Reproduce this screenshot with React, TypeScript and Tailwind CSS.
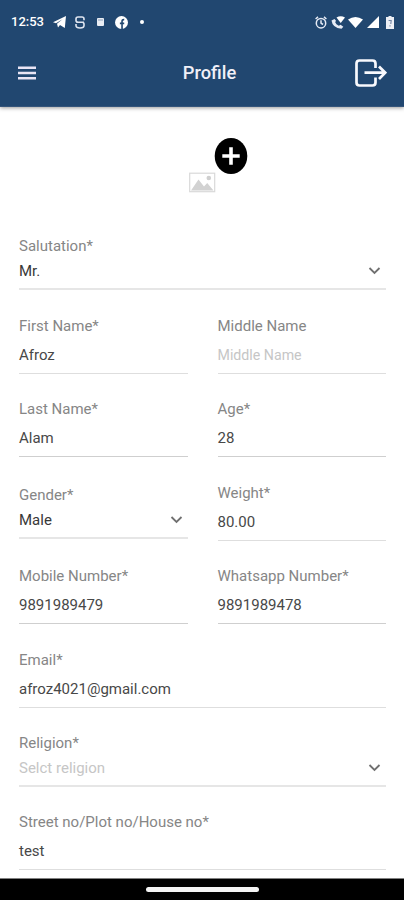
import React from "react";

type FieldProps = {
  label: string;
  value: string;
  muted?: boolean;
  line?: string;
};

function TextField({ label, value, muted = false, line = "border-[#dedede]" }: FieldProps) {
  return (
    <div className={`flex h-[58px] min-w-0 flex-1 flex-col gap-[9px] border-b ${line}`}>
      <div className="h-5 whitespace-nowrap text-[15px] leading-5 text-[#868686]">{label}</div>
      <div
        className={
          muted
            ? "h-5 whitespace-nowrap text-[14.2px] leading-5 text-[#c6c6c6]"
            : "h-5 whitespace-nowrap text-[15px] leading-5 text-[#484848]"
        }
      >
        {value}
      </div>
    </div>
  );
}

function SelectField({ label, value, muted = false }: FieldProps) {
  return (
    <div className="flex min-w-0 flex-1 flex-col gap-[5px] border-b-2 border-[#e6e6e6]">
      <div className="h-5 whitespace-nowrap text-[15px] leading-5 text-[#868686]">{label}</div>
      <div className="flex h-[27px] items-start justify-between pr-[5px]">
        <span className={muted ? "text-[15px] leading-5 text-[#c6c6c6]" : "text-[15px] leading-5 text-[#383838]"}>
          {value}
        </span>
        <svg className="mt-[5px]" width="13" height="10" viewBox="0 0 13 10" fill="none" stroke="#707070" strokeWidth="1.8">
          <path d="M1.5 2 6.5 7 11.5 2" />
        </svg>
      </div>
    </div>
  );
}

function StatusBar() {
  return (
    <div className="flex h-11 items-center justify-between pl-[11px] pr-[10px] text-white">
      <div className="flex items-center">
        <span className="w-[34px] text-[13px] font-medium leading-4">12:53</span>
        <svg className="ml-[8px]" width="13" height="12" viewBox="0 0 13 12" fill="#fff">
          <path d="M0 6.3 13 0 11.8 12 7 9 5 11.4 4 7.8 9.5 3.2 3 7.3Z" />
        </svg>
        <svg className="ml-[9px]" width="10" height="13" viewBox="0 0 10 13" fill="none" stroke="#dfe5f0" strokeWidth="1.6">
          <path d="M9 4.2V3Q9 1 7 1H3Q1 1 1 3V4.6Q1 6.2 3 6.2H7Q9 6.2 9 8V9.5Q9 12 5 12T1 9.5V8M1 6.2H9" />
        </svg>
        <svg className="ml-[12px]" width="7" height="8" viewBox="0 0 7 8">
          <rect width="7" height="8" rx="1" fill="#e9edf4" />
          <path d="M1 2H6" stroke="#8da1bb" strokeWidth="1" />
        </svg>
        <svg className="ml-[11px]" width="13" height="13" viewBox="0 0 12 12">
          <circle cx="6" cy="6" r="6" fill="#fff" />
          <path d="M6.5 12V5Q6.5 3.2 8.5 3.4M4.5 6.8H8.5" fill="none" stroke="#214770" strokeWidth="1.5" />
        </svg>
        <span className="ml-[12px] h-1 w-1 rounded-full bg-white" />
      </div>
      <div className="flex items-center">
        <svg width="12" height="13" viewBox="0 0 12 13" fill="none" stroke="#e6ebf5" strokeWidth="1.5">
          <circle cx="6" cy="7.2" r="4.7" />
          <path d="M.6 3 3 .9M11.4 3 9 .9M6 4.2V7.2L8 8.5" />
        </svg>
        <svg className="ml-[4px]" width="14" height="13" viewBox="0 0 14 13">
          <path d="M.5 4.5Q1.5 12 10.5 12.8L12.3 10.8 9.6 8.8 7.8 9.8Q5 8.5 4.2 6.3L5 4.8 3.5 3Z" fill="#e6ebf5" />
          <path d="M5.5 1.6Q9.7-1.2 14 1.6L9.7 7Z" fill="#fff" />
        </svg>
        <svg className="ml-[3px]" width="15" height="11" viewBox="0 0 15 11" fill="#fff">
          <path d="M0 2.6Q7.5-2.6 15 2.6L7.5 11Z" />
        </svg>
        <svg className="ml-[4px]" width="12" height="12" viewBox="0 0 12 12" fill="#fff">
          <path d="M12 0V12H0Z" />
        </svg>
        <svg className="ml-[7px]" width="8" height="13" viewBox="0 0 8 13">
          <path d="M2.5 0H5.5V1H8V13H0V1H2.5Z" fill="#eceff5" />
          <path d="M2.6 4.5H5.2L4.8 8M4 9.3V10.5" fill="none" stroke="#6e83a3" strokeWidth="1.1" />
        </svg>
      </div>
    </div>
  );
}

function Header() {
  return (
    <header className="z-10 h-[107px] shrink-0 border-b border-[#35557b] bg-[#214770] shadow-[0_1px_4px_rgba(0,0,0,0.4)]">
      <StatusBar />
      <div className="grid h-[57px] grid-cols-[1fr_auto_1fr] items-center pl-[18px] pr-[17px]">
        <svg width="18" height="14" viewBox="0 0 18 14" stroke="#e9e5f5" strokeWidth="2.6">
          <path d="M0 1.8H18M0 7H18M0 12.2H18" />
        </svg>
        <h1 className="pl-[14px] text-[18.3px] font-medium leading-6 text-[#f0f0f8]">Profile</h1>
        <svg className="justify-self-end" width="32" height="28" viewBox="0 0 32 28" fill="none" stroke="#f8f9fd" strokeWidth="2.7">
          <path d="M20.5 9V4.5Q20.5 1.5 17.5 1.5H4.5Q1.5 1.5 1.5 4.5V23.5Q1.5 26.5 4.5 26.5H17.5Q20.5 26.5 20.5 23.5V18.5" />
          <path d="M9.5 13.7H30M24 7.5 30.2 13.7 24 20" />
        </svg>
      </div>
    </header>
  );
}

function PhotoPicker() {
  return (
    <div className="h-[129px] shrink-0 pl-[188px] pt-[31px]">
      <svg width="60" height="56" viewBox="0 0 60 56">
        <rect x="1.7" y="35.2" width="25" height="18.5" fill="#fff" stroke="#d9d9d9" strokeWidth="1.2" />
        <path d="M3 52.5 10.5 41.5 16 48.5 19.2 45 25.5 52.5Z" fill="#d2d2d2" />
        <circle cx="20.8" cy="40" r="2.3" fill="#cfcfcf" />
        <ellipse cx="43" cy="18" rx="16.3" ry="18" fill="#000" />
        <path d="M43 9.2V26.8M34.3 18H51.7" stroke="#fff" strokeWidth="3.6" />
      </svg>
    </div>
  );
}

export default function App() {
  return (
    <div className="flex h-[900px] w-[404px] flex-col overflow-hidden bg-white font-[Roboto,sans-serif]">
      <Header />
      <PhotoPicker />
      <main className="flex h-[642px] shrink-0 flex-col pl-[19px] pr-[18px]">
        <div className="flex h-[54px]">
          <SelectField label="Salutation*" value="Mr." />
        </div>
        <div className="mt-[26px] flex gap-[30px]">
          <TextField label="First Name*" value="Afroz" />
          <TextField label="Middle Name" value="Middle Name" muted />
        </div>
        <div className="mt-[25px] flex gap-[30px]">
          <TextField label="Last Name*" value="Alam" line="border-[#cfcfcf]" />
          <TextField label="Age*" value="28" line="border-[#cfcfcf]" />
        </div>
        <div className="mt-[26px] flex h-[58px] gap-[30px]">
          <div className="flex h-[56px] flex-1 pt-[2px]">
            <SelectField label="Gender*" value="Male" />
          </div>
          <TextField label="Weight*" value="80.00" />
        </div>
        <div className="mt-[25px] flex gap-[30px]">
          <TextField label="Mobile Number*" value="9891989479" line="border-[#cfcfcf]" />
          <TextField label="Whatsapp Number*" value="9891989478" line="border-[#cfcfcf]" />
        </div>
        <div className="mt-[26px] flex">
          <TextField label="Email*" value="afroz4021@gmail.com" />
        </div>
        <div className="mt-[25px] flex h-[54px]">
          <SelectField label="Religion*" value="Selct religion" muted />
        </div>
        <div className="mt-[25px] flex">
          <TextField label="Street no/Plot no/House no*" value="test" />
        </div>
      </main>
      <nav className="flex h-[22px] shrink-0 items-center justify-center border-t border-[#808080] bg-black">
        <div className="h-[5px] w-[113px] rounded-full bg-[#f5f5f5]" />
      </nav>
    </div>
  );
}
